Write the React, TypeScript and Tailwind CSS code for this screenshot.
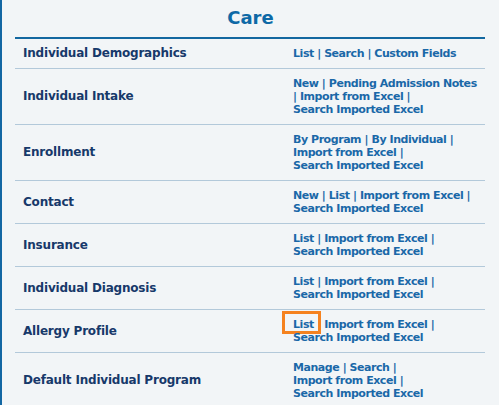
import React from 'react'

type Row = { label: string; links: string[]; highlight?: number }

const rows: Row[] = [
  { label: 'Individual Demographics', links: ['List', 'Search', 'Custom Fields'] },
  { label: 'Individual Intake', links: ['New', 'Pending Admission Notes', 'Import from Excel', 'Search Imported Excel'] },
  { label: 'Enrollment', links: ['By Program', 'By Individual', 'Import from Excel', 'Search Imported Excel'] },
  { label: 'Contact', links: ['New', 'List', 'Import from Excel', 'Search Imported Excel'] },
  { label: 'Insurance', links: ['List', 'Import from Excel', 'Search Imported Excel'] },
  { label: 'Individual Diagnosis', links: ['List', 'Import from Excel', 'Search Imported Excel'] },
  { label: 'Allergy Profile', links: ['List', 'Import from Excel', 'Search Imported Excel'], highlight: 0 },
  { label: 'Default Individual Program', links: ['Manage', 'Search', 'Import from Excel', 'Search Imported Excel'] },
]

const LinkList = ({ links, highlight }: { links: string[]; highlight?: number }) => (
  <>
    {links.map((l, i) => (
      <React.Fragment key={i}>
        {i > 0 && ' | '}
        <span className="relative whitespace-nowrap">
          <a className="cursor-pointer">{l}</a>
          {i === highlight && (
            <span className="pointer-events-none absolute -left-[11px] -top-[7px] h-[23px] w-[39px] border-[3px] border-[#f5821f]" />
          )}
        </span>
      </React.Fragment>
    ))}
  </>
)

export default function App() {
  return (
    <div className="h-[405px] w-[499px] overflow-hidden border-l-2 border-[#1367a3] bg-[#f2f5f7] px-[13px] font-['DejaVu_Sans',Verdana,sans-serif]">
      <h1 className="pt-[7px] text-center text-[18px] leading-[22px] font-bold text-[#0e69a6]">Care</h1>
      <div className="mt-[8px] h-[2px] w-[470px] bg-[#1368a0]" />
      <div className="w-[470px]">
        {rows.map((r) => (
          <div key={r.label} className="grid grid-cols-[270px_200px] border-b border-[#b3c9da]">
            <div className="flex items-center px-2 py-2 text-[12px] leading-[13px] font-bold tracking-[-0.2px] text-[#17396a]">
              {r.label}
            </div>
            <div className="px-2 py-2 text-[11px] leading-[13px] font-bold tracking-[-0.45px] text-[#1a68a8]">
              <LinkList links={r.links} highlight={r.highlight} />
            </div>
          </div>
        ))}
      </div>
    </div>
  )
}
